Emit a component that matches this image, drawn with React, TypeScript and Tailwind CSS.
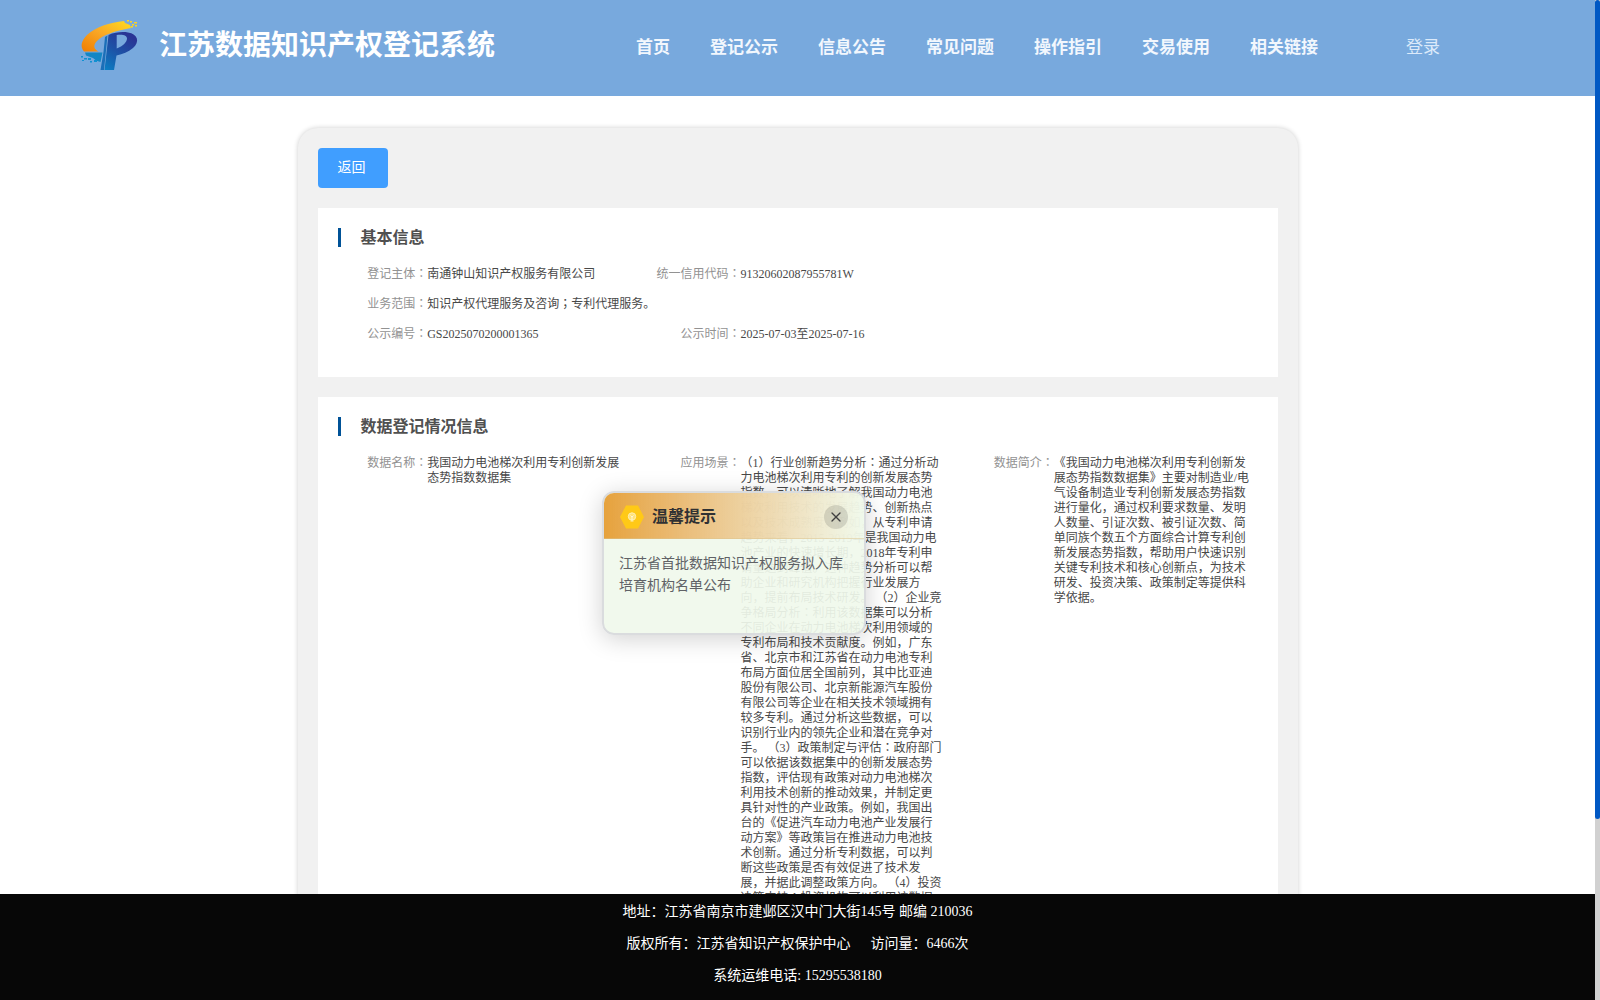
import React from 'react';
import { X } from 'lucide-react';

interface InfoItem {
  label: string;
  lines: string[];
}

const navItems = ['首页', '登记公示', '信息公告', '常见问题', '操作指引', '交易使用', '相关链接'];

const basicRows: InfoItem[][] = [
  [
    { label: '登记主体', lines: ['南通钟山知识产权服务有限公司'] },
    { label: '统一信用代码', lines: ['91320602087955781W'] },
  ],
  [{ label: '业务范围', lines: ['知识产权代理服务及咨询；专利代理服务。'] }],
  [
    { label: '公示编号', lines: ['GS2025070200001365'] },
    { label: '公示时间', lines: ['2025-07-03至2025-07-16'] },
  ],
];

const dataRows: InfoItem[][] = [
  [
    { label: '数据名称', lines: ['我国动力电池梯次利用专利创新发展', '态势指数数据集'] },
    {
      label: '应用场景',
      lines: [
        '（1）行业创新趋势分析：通过分析动',
        '力电池梯次利用专利的创新发展态势',
        '指数，可以清晰地了解我国动力电池',
        '梯次利用技术的发展趋势、创新热点',
        '以及技术成熟度。例如，从专利申请',
        '趋势来看，2015-2019年是我国动力电',
        '池产业的快速增长期，2018年专利申',
        '请量达到峰值。这种趋势分析可以帮',
        '助企业和研究机构把握行业发展方',
        '向，提前布局技术研发。 （2）企业竞',
        '争格局分析：利用该数据集可以分析',
        '不同企业在动力电池梯次利用领域的',
        '专利布局和技术贡献度。例如，广东',
        '省、北京市和江苏省在动力电池专利',
        '布局方面位居全国前列，其中比亚迪',
        '股份有限公司、北京新能源汽车股份',
        '有限公司等企业在相关技术领域拥有',
        '较多专利。通过分析这些数据，可以',
        '识别行业内的领先企业和潜在竞争对',
        '手。 （3）政策制定与评估：政府部门',
        '可以依据该数据集中的创新发展态势',
        '指数，评估现有政策对动力电池梯次',
        '利用技术创新的推动效果，并制定更',
        '具针对性的产业政策。例如，我国出',
        '台的《促进汽车动力电池产业发展行',
        '动方案》等政策旨在推进动力电池技',
        '术创新。通过分析专利数据，可以判',
        '断这些政策是否有效促进了技术发',
        '展，并据此调整政策方向。 （4）投资',
        '决策支持：投资机构可以利用该数据',
      ],
    },
    {
      label: '数据简介',
      lines: [
        '《我国动力电池梯次利用专利创新发',
        '展态势指数数据集》主要对制造业/电',
        '气设备制造业专利创新发展态势指数',
        '进行量化，通过权利要求数量、发明',
        '人数量、引证次数、被引证次数、简',
        '单同族个数五个方面综合计算专利创',
        '新发展态势指数，帮助用户快速识别',
        '关键专利技术和核心创新点，为技术',
        '研发、投资决策、政策制定等提供科',
        '学依据。',
      ],
    },
  ],
];

const Logo = () => (
  <svg className="mb-1.5 h-[54px] w-[60px] shrink-0" viewBox="0 0 60 54">
    <defs>
      <linearGradient id="swoosh" x1="0" y1="1" x2="1" y2="0">
        <stop offset="0" stopColor="#f07d00" />
        <stop offset="0.5" stopColor="#f9a826" />
        <stop offset="1" stopColor="#ffdc1e" />
      </linearGradient>
      <linearGradient id="stem" x1="0" y1="1" x2="0.6" y2="0">
        <stop offset="0" stopColor="#0a7fc4" />
        <stop offset="0.5" stopColor="#1c55a8" />
        <stop offset="1" stopColor="#2a3494" />
      </linearGradient>
    </defs>
    <path d="M44 3C30 4.5 15 9 7 17C1 23 0 29 4 33.5H18.5C13.5 31 13 27 17 23C23 17 34 13 51 10L50 7L45 5Z" fill="url(#swoosh)" />
    <path d="M5 34.5H22.5L20.5 44C17 43 15 42 13 40L6 37.5Z" fill="#1286c4" />
    <path d="M25 19L27.5 17.5L24 52H20.5L23.5 34Z" fill="#1b6fb8" />
    <path
      d="M28.5 17C35 14 43 13.5 48 14.5C58 16 60 24 53 30C48 34 43 36 36.5 37.5L34 52H24.5ZM36.7 17V30.5C43 28 47 24 47 20.5C47 17.5 43 16 36.7 17Z"
      fill="url(#stem)"
      fillRule="evenodd"
    />
    <path d="M47 2h2v1.5h-2zM50 3h2v1.5h-2zM54 4h3v1.5h-3zM52 6h2v1.5h-2zM55 7h2v1.5h-2zM51 8h2v1.5h-2z" fill="#ffd51e" />
    <path d="M1 38h2v1.5H1zM4 40h3v1.5H4zM8 40h3v2H8zM10 43h2v1.5h-2zM2 42h2v1H2zM14 42h3v2h-3z" fill="#0f91d2" />
  </svg>
);

// Colons and semicolons sit in the middle of their cell in the info tables
const renderText = (text: string) =>
  text.split(/([：；])/).map((part, index) =>
    part === '：' || part === '；' ? (
      <span key={index} className="font-['Noto_Sans_CJK_JP',sans-serif] leading-none">
        {part}
      </span>
    ) : (
      part
    )
  );

const Section = ({ title, rows, className }: { title: string; rows: InfoItem[][]; className: string }) => (
  <section className={`bg-white px-5 pt-5 ${className}`}>
    <h2 className="flex h-[19px] items-center border-l-[3px] border-[#005297] pl-5 text-base font-bold text-[#505050]">
      {title}
    </h2>
    <div className="mt-5 flex flex-col gap-[15px] pl-[9.7px] text-xs leading-[15px]">
      {rows.map((row, index) => (
        <dl key={index} className="flex">
          {row.map(item => (
            <div key={item.label} className="flex w-[313.3px] shrink-0">
              <dt className="flex w-20 shrink-0 justify-end whitespace-nowrap text-[#929292]">
                <span>{renderText(`${item.label}：`)}</span>
              </dt>
              <dd className="whitespace-nowrap text-[#484848]">
                {item.lines.map(line => (
                  <div key={line} className="h-[15px]">{renderText(line)}</div>
                ))}
              </dd>
            </div>
          ))}
        </dl>
      ))}
    </div>
  </section>
);

const Notice = () => (
  <div className="absolute left-[602px] top-[491px] h-[144px] w-[264px] overflow-hidden rounded-xl border-2 border-[#dadcde] bg-[#f0f9eb]/92 shadow-[0_4px_24px_rgba(0,0,0,0.18)]">
    <div className="flex h-[46px] items-center border-b border-[#dcc48e]/50 bg-linear-to-r from-[#e6a23c] to-[#f0f9eb]/60 pl-4 pr-4 pt-[3px]">
      <svg className="h-6 w-6" viewBox="0 0 24 24">
        <path d="M6 .5h12L24 12l-6 11.5H6L0 12z" fill="#ffc917" />
        <circle cx="12" cy="11.5" r="3.7" fill="#ffe27a" stroke="#fff0b0" />
        <path d="M10.5 10.5l1.5 1.5l1.5-1.5M12 12v3M10.5 16h3" stroke="#fffbe8" fill="none" strokeWidth=".8" />
      </svg>
      <h3 className="ml-2 text-base font-bold text-[#303133]">温馨提示</h3>
      <button className="ml-auto flex h-6 w-6 items-center justify-center rounded-full bg-black/12 text-[#404040]">
        <X className="h-4 w-4" strokeWidth={2} />
      </button>
    </div>
    <p className="whitespace-nowrap px-[15px] pt-3.5 text-sm leading-[22px] text-[#606266]">
      江苏省首批数据知识产权服务拟入库
      <br />
      培育机构名单公布
    </p>
  </div>
);

export default function App() {
  return (
    <div className="relative flex h-[1000px] w-[1600px] overflow-hidden bg-white font-['Liberation_Serif','Noto_Sans_CJK_SC',serif] [text-spacing-trim:space-all]">
      <div className="flex w-[1595px] flex-col">
        <header className="flex h-24 shrink-0 items-center bg-[#78a9dd] pl-20 text-white">
          <Logo />
          <h1 className="mb-1 ml-[19px] w-[477px] text-[28px] font-bold leading-none">江苏数据知识产权登记系统</h1>
          <nav className="flex gap-10 text-[17px] font-bold text-[#f2f7fd]">
            {navItems.map(item => (
              <a key={item}>{item}</a>
            ))}
          </nav>
          <a className="ml-[88px] text-[17px] text-[#dceafa]">登录</a>
        </header>

        <main className="min-h-0 flex-1 overflow-hidden pt-8">
          <div className="mx-auto flex h-[1100px] w-[1000px] flex-col items-start gap-5 rounded-[20px] bg-[#f1f1f1] p-5 shadow-[0_0_5px_rgba(0,0,0,0.2)]">
            <button className="h-10 w-[70px] rounded bg-[#409eff] pr-0.5 text-sm text-white">返回</button>
            <Section title="基本信息" rows={basicRows} className="h-[169px] w-full shrink-0" />
            <Section title="数据登记情况信息" rows={dataRows} className="w-full flex-1" />
          </div>
        </main>

        <footer className="h-[106px] shrink-0 bg-[#070707] pt-0.5 text-center text-sm leading-8 text-white">
          <p>地址：江苏省南京市建邺区汉中门大街145号 邮编 210036</p>
          <p>
            版权所有：江苏省知识产权保护中心<span className="ml-5">访问量：6466次</span>
          </p>
          <p>系统运维电话: 15295538180</p>
        </footer>
      </div>

      <div className="w-[5px] bg-[#d1d1d1]">
        <div className="h-[819px] rounded-full bg-[#0058c4]" />
      </div>

      <Notice />
    </div>
  );
}
